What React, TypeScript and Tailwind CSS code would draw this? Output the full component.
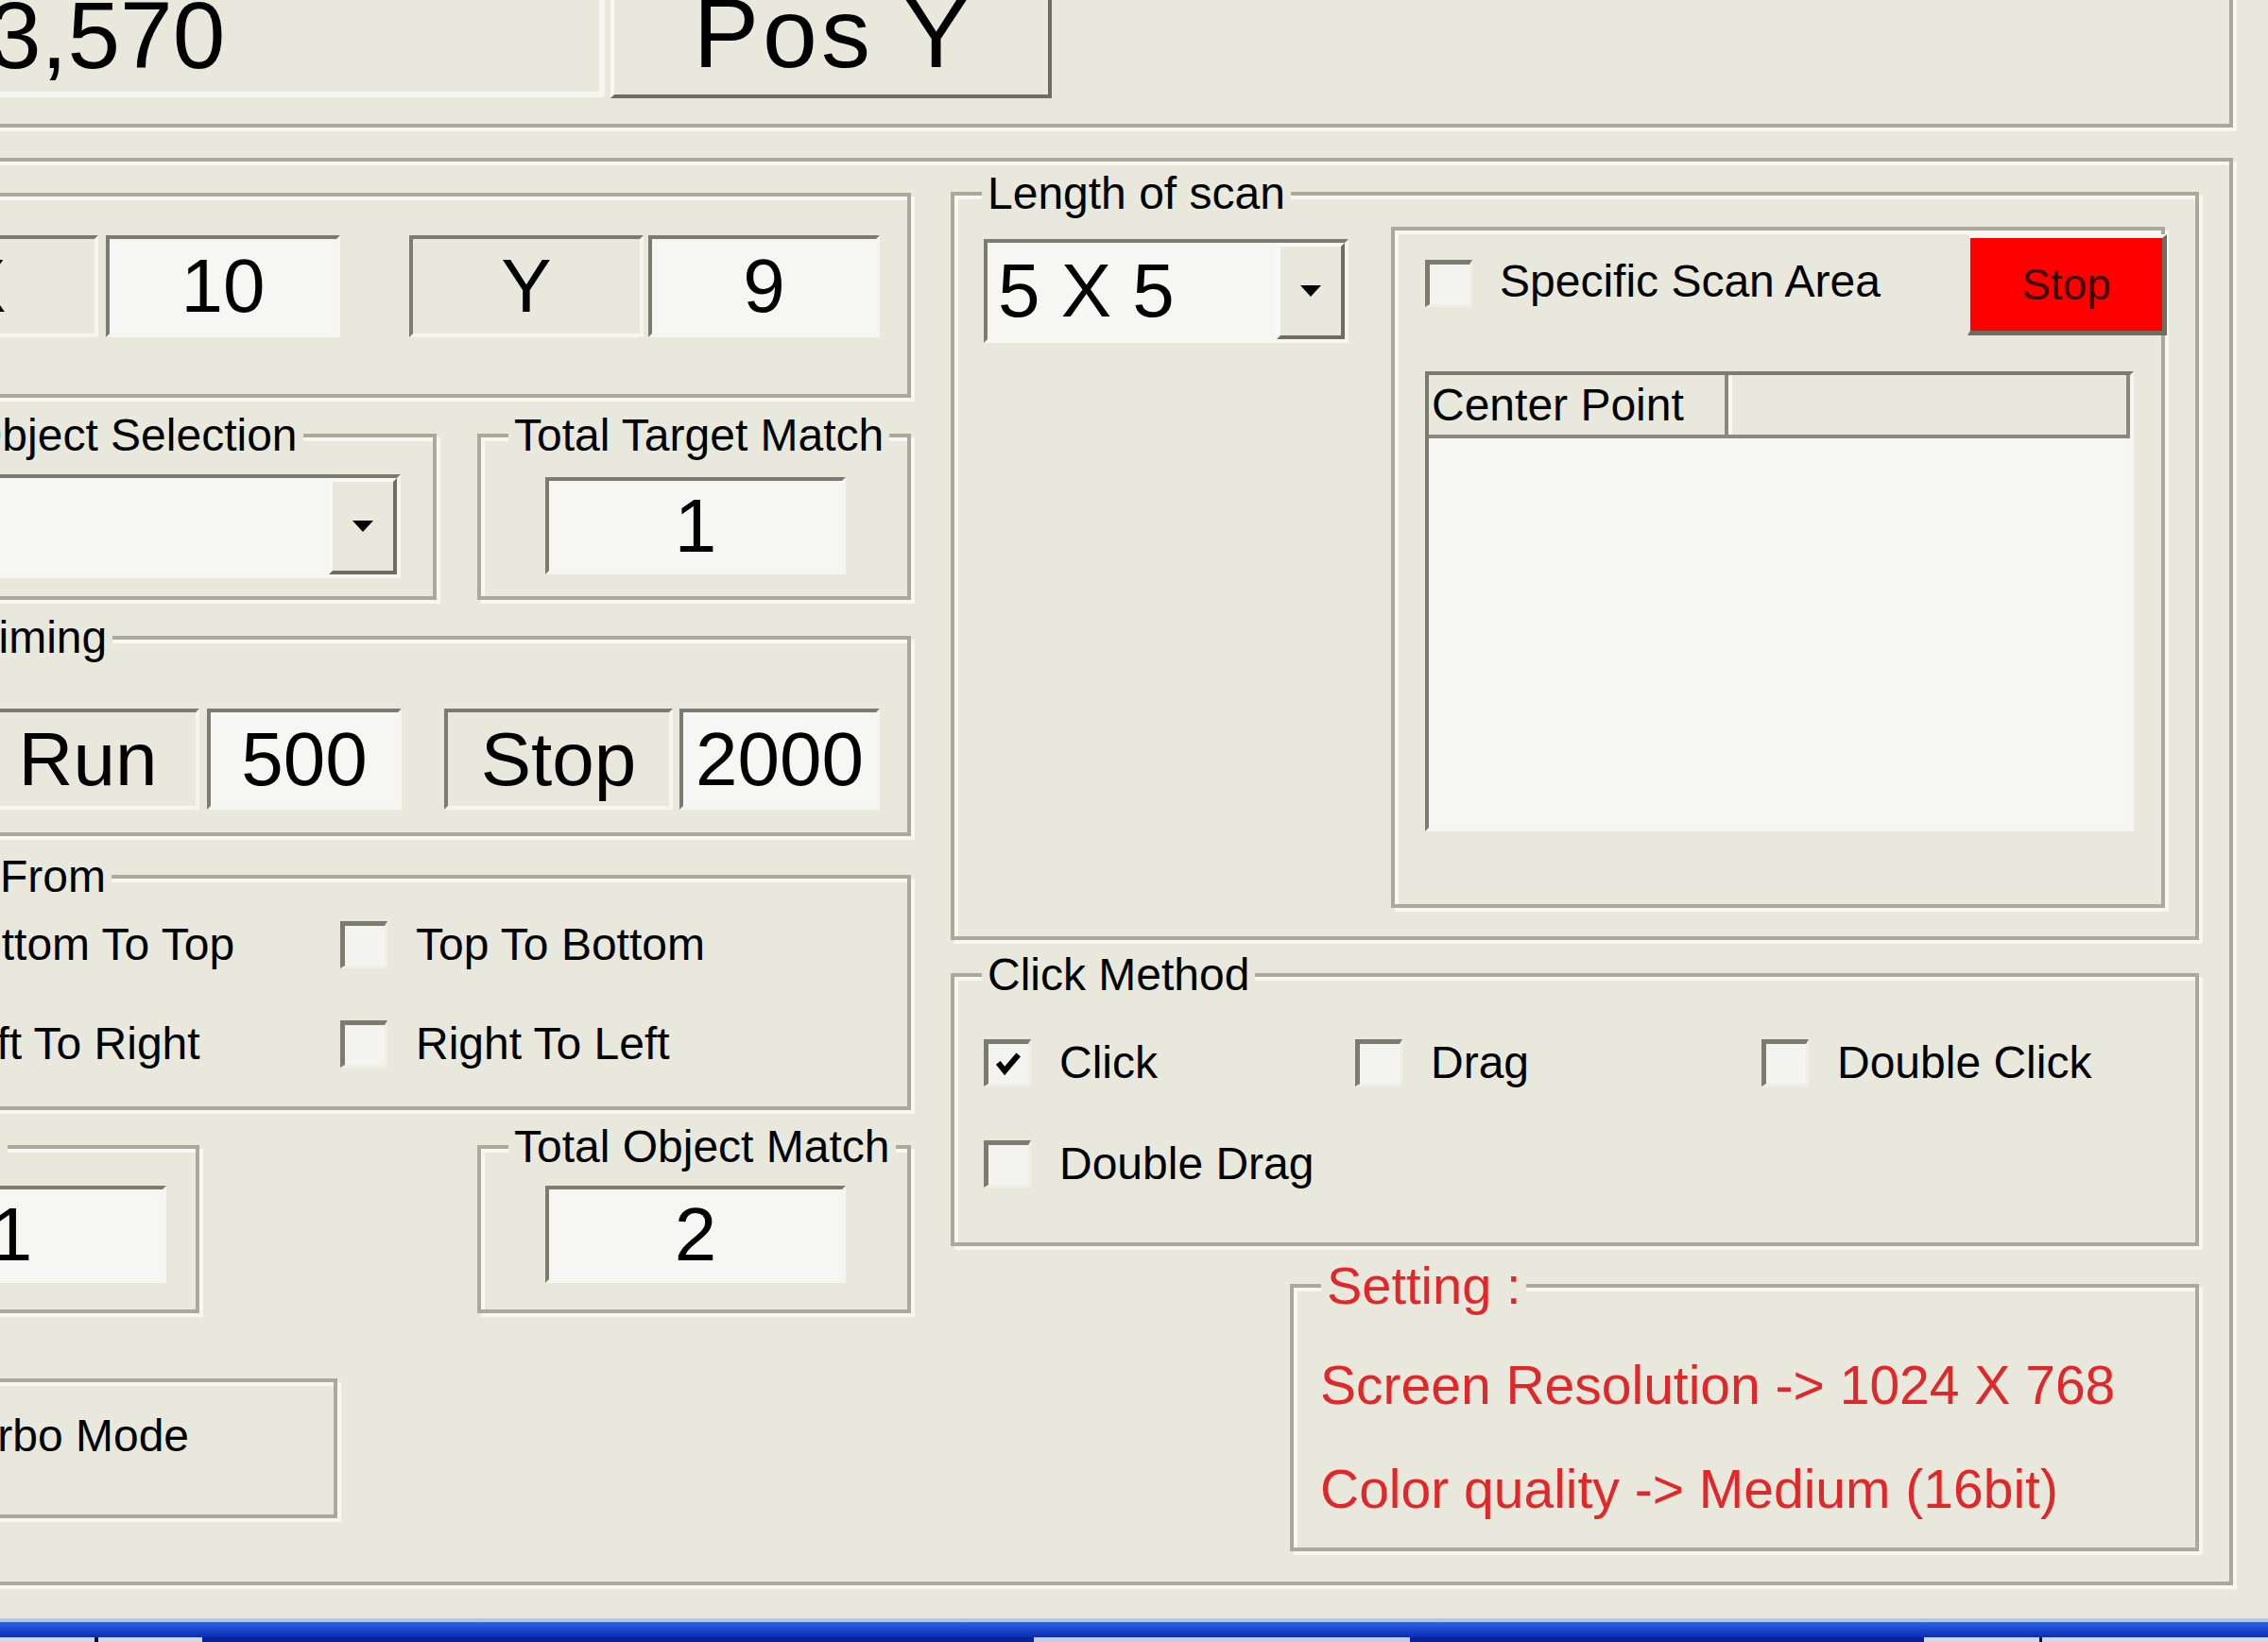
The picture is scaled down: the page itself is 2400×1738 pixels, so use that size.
import type { ReactNode } from 'react';

// shared edge styles for the classic dialog controls
const etched = 'box-border border-4 border-[#aaa99a] shadow-[inset_4px_4px_0_#f8f8f2,4px_4px_0_#f8f8f2]';
const sunken =
  'box-border border-4 border-t-[#7c7b6f] border-l-[#7c7b6f] border-b-[#f6f6f1] border-r-[#f6f6f1]';
const raised =
  'box-border border-4 border-t-[#f8f8f4] border-l-[#f8f8f4] border-b-[#6e6d62] border-r-[#6e6d62]';
const bigText = 'text-[80px] leading-none';
const smallLabel = 'block w-fit -mt-[26px] -mb-[22px] px-[6px] bg-[#e8e8dc] text-[48px] leading-[48px]';

type GroupProps = { className?: string; children?: ReactNode };

const GroupBox = ({ className = '', children }: GroupProps) => (
  <div className={`${etched} ${className}`}>{children}</div>
);

const Field = ({ value, className = '' }: { value: string; className?: string }) => (
  <div className={`${sunken} bg-[#f6f6f4] flex items-center justify-center ${bigText} ${className}`}>{value}</div>
);

const Cell = ({ value, className = '' }: { value: string; className?: string }) => (
  <div className={`${sunken} bg-[#e8e8dc] flex items-center justify-center ${bigText} ${className}`}>{value}</div>
);

const Arrow = () => (
  <svg width="22" height="12" viewBox="0 0 22 12">
    <path d="M0 0H22L11 12Z" fill="#000" />
  </svg>
);

const Combo = ({ value, className = '' }: { value?: string; className?: string }) => (
  <div className={`${sunken} flex ${className}`}>
    <div className={`flex-1 bg-[#f6f6f4] flex items-center pl-[11px] ${bigText}`}>{value}</div>
    <div className={`${raised} w-[72px] h-full bg-[#e8e8dc] flex items-center justify-center`}>
      <Arrow />
    </div>
  </div>
);

const CheckBox = ({ checked = false }: { checked?: boolean }) => (
  <div className="box-border w-[50px] h-[50px] shrink-0 border-t-[5px] border-l-[5px] border-b-[3px] border-r-[3px] border-t-[#7c7b6f] border-l-[#7c7b6f] border-b-[#efefe8] border-r-[#efefe8] bg-[#f3f3ef] flex items-center justify-center">
    {checked && (
      <svg viewBox="0 0 14 14" className="w-[30px] h-[30px]">
        <path d="M2 6.5 L5.2 10.5 L12 2.5" stroke="#000" strokeWidth="2.8" fill="none" />
      </svg>
    )}
  </div>
);

const CheckRow = ({ label, checked, className = '' }: { label: string; checked?: boolean; className?: string }) => (
  <div className={`flex items-center gap-[30px] h-[60px] ${className}`}>
    <CheckBox checked={checked} />
    <span className="text-[48px] leading-[48px] whitespace-nowrap">{label}</span>
  </div>
);

const taskSegments = [
  { w: 'w-[100px]', c: 'bg-[#d4d8e4]' },
  { w: 'w-[4px]', c: 'bg-[#10142a]' },
  { w: 'w-[110px]', c: 'bg-[#d4d8e4]' },
  { w: 'w-[880px]', c: 'bg-[#0a2396]' },
  { w: 'w-[398px]', c: 'bg-[#c6cde2]' },
  { w: 'w-[544px]', c: 'bg-[#0a2396]' },
  { w: 'w-[122px]', c: 'bg-[#d4d8e4]' },
  { w: 'w-[3px]', c: 'bg-[#10142a]' },
  { w: 'flex-1', c: 'bg-[#d4d8e4]' },
];

export default function App() {
  return (
    <div className="w-[2400px] h-[1738px] overflow-hidden bg-[#e8e8dc] text-black flex flex-col font-['Liberation_Sans',Arial,sans-serif]">
      {/* position readout strip */}
      <div className={`${etched} shrink-0 -mt-[60px] -ml-[230px] w-[2593px] h-[195px] flex items-start`}>
        <div className="box-border w-[866px] h-[159px] border-b-[6px] border-r-[6px] border-[#f6f6f0] pt-[43px] pl-[214px] text-[100px] leading-[100px]">
          3,570
        </div>
        <div className={`${raised} ml-[6px] w-[467px] h-[160px] bg-[#e8e8dc] pt-[37px] pl-[4px] text-center text-[104px] leading-[100px] tracking-[4px]`}>
          Pos Y
        </div>
      </div>

      {/* main settings frame */}
      <div className={`${etched} shrink-0 mt-[32px] -ml-[230px] w-[2593px] h-[1511px] flex items-start`}>
        {/* left column */}
        <div className="ml-[26px] w-[1164px] flex flex-col items-start">
          <GroupBox className="mt-[33px] w-[1164px] h-[217px] pt-[41px] flex items-start">
            <Cell value="X" className="ml-[52px] w-[248px] h-[108px]" />
            <Field value="10" className="ml-[8px] w-[248px] h-[108px]" />
            <Cell value="Y" className="ml-[73px] w-[248px] h-[108px]" />
            <Field value="9" className="ml-[5px] w-[245px] h-[108px]" />
          </GroupBox>

          <div className="mt-[38px] flex items-start">
            <GroupBox className="w-[662px] h-[176px]">
              <span className={`${smallLabel} ml-[155px]`}>Object Selection</span>
              <Combo className="mt-[39px] ml-[146px] w-[474px] h-[110px]" />
            </GroupBox>
            <GroupBox className="ml-[43px] w-[459px] h-[176px]">
              <span className={`${smallLabel} ml-[29px]`}>Total Target Match</span>
              <Field value="1" className="mt-[42px] ml-[68px] w-[318px] h-[103px]" />
            </GroupBox>
          </div>

          <GroupBox className="mt-[38px] w-[1164px] h-[212px]">
            <span className={`${smallLabel} ml-[161px]`}>Timing</span>
            <div className="mt-[73px] flex items-start">
              <Cell value="Run" className="ml-[171px] w-[236px] h-[107px]" />
              <Field value="500" className="ml-[8px] w-[206px] h-[107px]" />
              <Cell value="Stop" className="ml-[45px] w-[242px] h-[107px]" />
              <Field value="2000" className="ml-[7px] w-[212px] h-[107px]" />
            </div>
          </GroupBox>

          <GroupBox className="mt-[41px] w-[1164px] h-[249px]">
            <span className={`${smallLabel} ml-[190px]`}>From</span>
            <div className="mt-[40px] ml-[59px] flex flex-col gap-[45px]">
              <div className="flex">
                <CheckRow label="Bottom To Top" className="w-[497px]" />
                <CheckRow label="Top To Bottom" />
              </div>
              <div className="flex">
                <CheckRow label="Left To Right" className="w-[497px]" />
                <CheckRow label="Right To Left" />
              </div>
            </div>
          </GroupBox>

          <div className="mt-[37px] flex items-start">
            <GroupBox className="w-[411px] h-[178px]">
              <span className="block -mt-[26px] -mb-[22px] w-[204px] h-[48px] bg-[#e8e8dc]" />
              <Field value="1" className="mt-[39px] ml-[44px] w-[328px] h-[103px]" />
            </GroupBox>
            <GroupBox className="ml-[294px] w-[459px] h-[178px]">
              <span className={`${smallLabel} ml-[29px]`}>Total Object Match</span>
              <Field value="2" className="mt-[39px] ml-[68px] w-[318px] h-[103px]" />
            </GroupBox>
          </div>

          <GroupBox className="mt-[69px] w-[557px] h-[148px] pt-[27px]">
            <CheckRow label="Turbo Mode" className="ml-[59px]" />
          </GroupBox>
        </div>

        {/* right column */}
        <div className="ml-[42px] w-[1321px] flex flex-col items-start">
          <GroupBox className="mt-[32px] w-[1321px] h-[792px]">
            <span className={`${smallLabel} ml-[29px]`}>Length of scan</span>
            <div className="flex items-start">
              <Combo value="5 X 5" className="mt-[46px] ml-[31px] w-[386px] h-[110px]" />
              <GroupBox className="mt-[33px] ml-[45px] w-[819px] h-[721px] flex flex-col">
                <div className="flex items-start">
                  <div className="mt-[31px] ml-[32px]">
                    <CheckBox />
                  </div>
                  <span className="mt-[30px] ml-[29px] text-[48px] leading-[48px] whitespace-nowrap">Specific Scan Area</span>
                  <div className="flex-1" />
                  <button className="box-border mt-[4px] -mr-[6px] w-[211px] h-[107px] bg-[#ff0000] border-t-4 border-l-[3px] border-b-[5px] border-r-[5px] border-t-[#f7f7f2] border-l-[#f2e0dc] border-b-[#6e6d62] border-r-[#6e6d62] text-[46px] leading-none text-[#3a0606]">
                    Stop
                  </button>
                </div>
                <div className={`${sunken} mt-[38px] ml-[32px] w-[750px] h-[487px] bg-[#f6f6f4] flex flex-col`}>
                  <div className="h-[67px] flex bg-[#e8e8dc]">
                    <div className="box-border w-[317px] h-full border-r-4 border-b-4 border-r-[#8a897d] border-b-[#8a897d] flex items-center pl-[3px] text-[48px] leading-[48px] whitespace-nowrap">
                      Center Point
                    </div>
                    <div className="box-border w-[4px] h-full border-b-4 border-b-[#8a897d] bg-[#f8f8f4]" />
                    <div className="box-border flex-1 h-full border-r-4 border-b-4 border-r-[#8a897d] border-b-[#8a897d]" />
                  </div>
                  <div className="flex-1" />
                </div>
              </GroupBox>
            </div>
          </GroupBox>

          <GroupBox className="mt-[35px] w-[1321px] h-[289px]">
            <span className={`${smallLabel} ml-[29px]`}>Click Method</span>
            <div className="mt-[61px] ml-[31px] flex flex-col gap-[47px]">
              <div className="flex">
                <CheckRow label="Click" checked className="w-[393px]" />
                <CheckRow label="Drag" className="w-[430px]" />
                <CheckRow label="Double Click" />
              </div>
              <CheckRow label="Double Drag" />
            </div>
          </GroupBox>

          <GroupBox className="mt-[40px] ml-[359px] w-[962px] h-[283px] text-[#e0282a]">
            <span className="block w-fit -mt-[30px] -mb-[26px] ml-[29px] px-[6px] bg-[#e8e8dc] text-[56px] leading-[56px]">
              Setting :
            </span>
            <div className="mt-[75px] ml-[28px] flex flex-col gap-[54px] text-[57px] leading-[56px] whitespace-nowrap">
              <span>Screen Resolution -&gt; 1024 X 768</span>
              <span>Color quality -&gt; Medium (16bit)</span>
            </div>
          </GroupBox>
        </div>
      </div>

      <div className="shrink-0 h-[35px]" />

      {/* taskbar edge */}
      <div className="shrink-0 h-[25px] flex flex-col">
        <div className="h-[4px] bg-[#a9c6f6]" />
        <div className="h-[16px] bg-gradient-to-b from-[#2d62e4] to-[#0a2cb4]" />
        <div className="h-[5px] flex">
          {taskSegments.map((s, i) => (
            <div key={i} className={`${s.w} ${s.c}`} />
          ))}
        </div>
      </div>
    </div>
  );
}
